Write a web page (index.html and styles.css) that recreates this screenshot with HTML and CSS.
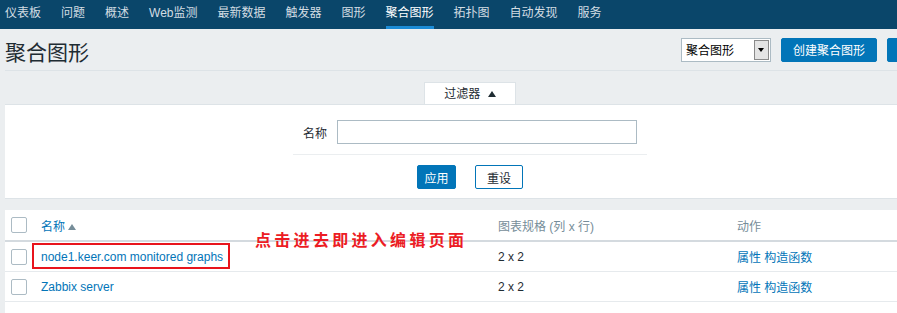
FILE: index.html
```html
<!DOCTYPE html>
<html lang="zh-CN">
<head>
    <meta charset="UTF-8">
    <title>聚合图形</title>
    <link rel="stylesheet" href="styles.css">
</head>
<body>
    <nav class="top-nav">
        <a href="#">仪表板</a>
        <a href="#">问题</a>
        <a href="#">概述</a>
        <a href="#">Web监测</a>
        <a href="#">最新数据</a>
        <a href="#">触发器</a>
        <a href="#">图形</a>
        <a href="#" class="selected">聚合图形</a>
        <a href="#">拓扑图</a>
        <a href="#">自动发现</a>
        <a href="#">服务</a>
    </nav>

    <div class="wrapper">
        <header class="header-title">
            <h1>聚合图形</h1>
            <div class="header-controls">
                <div class="select">
                    <span class="select-value">聚合图形</span>
                    <span class="select-btn"><i></i></span>
                </div>
                <button class="btn">创建聚合图形</button>
                <button class="btn btn-max"></button>
            </div>
        </header>

        <div class="filter-tabs">
            <span class="filter-tab">过滤器 <i class="arrow-up"></i></span>
        </div>
        <div class="filter-container">
            <div class="filter-form">
                <div class="filter-row">
                    <label for="filter_name">名称</label>
                    <input type="text" id="filter_name">
                </div>
                <div class="filter-buttons">
                    <button class="btn btn-apply">应用</button>
                    <button class="btn btn-alt">重设</button>
                </div>
            </div>
        </div>

        <div class="list-table">
            <table>
                <colgroup>
                    <col class="col-check">
                    <col class="col-name">
                    <col class="col-size">
                    <col class="col-action">
                </colgroup>
                <thead>
                    <tr>
                        <th><span class="checkbox"></span></th>
                        <th><a href="#" class="sort">名称</a><i class="sort-arrow"></i></th>
                        <th>图表规格 (列 x 行)</th>
                        <th>动作</th>
                    </tr>
                </thead>
                <tbody>
                    <tr>
                        <td><span class="checkbox"></span></td>
                        <td><a href="#" class="marked">node1.keer.com monitored graphs</a></td>
                        <td>2 x 2</td>
                        <td><a href="#">属性</a> <a href="#">构造函数</a></td>
                    </tr>
                    <tr>
                        <td><span class="checkbox"></span></td>
                        <td><a href="#">Zabbix server</a></td>
                        <td>2 x 2</td>
                        <td><a href="#">属性</a> <a href="#">构造函数</a></td>
                    </tr>
                </tbody>
            </table>
            <div class="table-stats">显示 2，共找到 2</div>
        </div>
    </div>

    <div class="note">点击进去即进入编辑页面</div>
</body>
</html>
```

FILE: styles.css
```css
body {
    margin: 0;
    width: 897px;
    height: 313px;
    overflow: hidden;
    position: relative;
    background-color: #ebeef0;
    font-family: "Liberation Sans", Arial, "Noto Sans CJK SC", sans-serif;
    font-size: 12px;
    color: #1f2c33;
}
a {
    color: #0275b8;
    text-decoration: none;
}

/* top menu */
.top-nav {
    display: flex;
    height: 29px;
    background-color: #0a466a;
}
.top-nav a {
    margin: 0 10px;
    padding-top: 1px;
    line-height: 25px;
    color: #d3dde3;
    border-bottom: 3px solid transparent;
    white-space: nowrap;
}
.top-nav a:first-child {
    margin-left: 5px;
}
.top-nav a.selected {
    color: #fff;
    border-bottom-color: #1b8bd6;
}

.wrapper {
    width: 930px;
    margin-left: 5px;
}

/* page header */
.header-title {
    display: flex;
    align-items: center;
    justify-content: space-between;
    height: 41px;
    border-bottom: 1px solid #dde3e7;
    padding-right: 24px;
}
.header-title h1 {
    margin: 0;
    font-size: 21px;
    font-weight: normal;
    color: #1f2c33;
    position: relative;
    top: 1px;
}
.header-controls {
    display: flex;
    align-items: center;
    gap: 10px;
}
.select {
    display: flex;
    align-items: center;
    width: 88px;
    height: 22px;
    border: 1px solid #acbbc4;
    background: #fff;
}
.select-value {
    flex: 1;
    padding-left: 4px;
    color: #000;
}
.select-btn {
    display: flex;
    align-items: center;
    justify-content: center;
    width: 15px;
    height: 20px;
    margin-right: 1px;
    background: #e4e4e4;
    border: 1px solid #8a8a8a;
    box-sizing: border-box;
}
.select-btn i {
    border-left: 3px solid transparent;
    border-right: 3px solid transparent;
    border-top: 4px solid #000;
}
.btn {
    height: 24px;
    padding: 0 11px;
    border: 1px solid #0275b8;
    border-radius: 2px;
    background-color: #0275b8;
    color: #fff;
    font-family: inherit;
    font-size: 12px;
    cursor: pointer;
}
.btn-max {
    width: 24px;
    padding: 0;
}

/* filter */
.filter-tabs {
    display: flex;
    justify-content: center;
    padding-top: 11px;
}
.filter-tab {
    width: 92px;
    height: 22px;
    line-height: 23px;
    text-align: center;
    background: #fff;
    border: 1px solid #dde3e7;
    border-bottom: none;
    box-sizing: border-box;
    color: #1f2c33;
}
.arrow-up {
    display: inline-block;
    margin-left: 4px;
    vertical-align: 1px;
    border-left: 4px solid transparent;
    border-right: 4px solid transparent;
    border-bottom: 6px solid #1f2c33;
}
.filter-container {
    background: #fff;
    border-top: 1px solid #dde3e7;
    border-bottom: 1px solid #dde3e7;
    padding: 15px 0 9px;
}
.filter-form {
    width: 354px;
    margin: 0 auto;
}
.filter-row {
    display: flex;
    align-items: center;
    justify-content: flex-end;
    gap: 10px;
    padding: 0 10px 10px;
    border-bottom: 1px solid #ebeef0;
}
.filter-row input {
    width: 300px;
    height: 24px;
    box-sizing: border-box;
    border: 1px solid #acbbc4;
    margin: 0;
}
.filter-buttons {
    display: flex;
    justify-content: center;
    gap: 19px;
    padding-top: 10px;
}
.btn-apply {
    width: 39px;
    padding: 0;
}
.btn-alt {
    width: 48px;
    padding: 0;
    background: #fff;
    color: #1f2c33;
}

/* list */
.list-table {
    margin-top: 11px;
    background: #fff;
    height: 120px;
}
.list-table table {
    width: 100%;
    table-layout: fixed;
    border-collapse: collapse;
}
.col-check { width: 30px; }
.col-name { width: 457px; }
.col-size { width: 239px; }
.list-table th,
.list-table td {
    padding: 0 6px;
    text-align: left;
    white-space: nowrap;
}
.list-table th {
    height: 30px;
    font-weight: normal;
    color: #768d99;
    border-bottom: 2px solid #d4dadf;
}
.list-table td {
    height: 29px;
    border-bottom: 1px solid #e6eaed;
}
.checkbox {
    display: block;
    width: 14px;
    height: 14px;
    border: 1px solid #acbbc4;
    border-radius: 2px;
    background: #fff;
}
.sort-arrow {
    display: inline-block;
    margin-left: 3px;
    vertical-align: 1px;
    border-left: 4px solid transparent;
    border-right: 4px solid transparent;
    border-bottom: 6px solid #768d99;
}
.marked {
    position: relative;
}
.marked::after {
    content: "";
    position: absolute;
    left: -9px;
    right: -7px;
    top: -7px;
    bottom: -5px;
    border: 2px solid #e8141c;
}
.table-stats {
    padding: 9px 55px 0 0;
    text-align: right;
    color: #768d99;
}

/* screenshot annotation */
.note {
    position: absolute;
    left: 255px;
    top: 229px;
    font-family: "Noto Sans CJK SC", sans-serif;
    font-size: 16px;
    font-weight: bold;
    letter-spacing: 3.3px;
    line-height: 20px;
    color: #ec1c24;
}
```
